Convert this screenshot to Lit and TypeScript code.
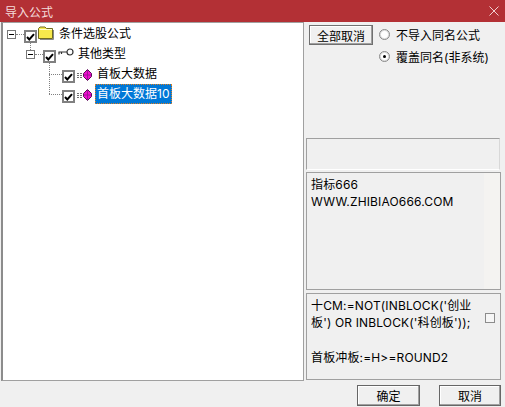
import { LitElement, html, css, svg } from "lit";
import { customElement } from "lit/decorators.js";

const check = html`<span class="chk"><svg width="9" height="8" viewBox="0 0 9 8"><path d="M1 4 L3.3 6.5 L8 1.2" fill="none" stroke="#000" stroke-width="2"/></svg></span>`;
const dotH = (w: number) => html`<span class="dot-h" style="width:${w}px"></span>`;
const expander = html`<span class="exp"><i></i></span>`;
const folder = html`<svg class="ic" width="16" height="14" viewBox="0 0 16 14"><path d="M.5 12.5 V2.5 L2 1 H7 L8.5 2.5 H14.5 V12.5 Z" fill="#f6e84c" stroke="#6f6a20"/><path d="M1.5 3.5 H14" stroke="#fffbd0"/><path d="M15.5 4 V13.5 H2" stroke="#888" fill="none"/></svg>`;
const key = html`<svg class="ic" width="16" height="9" viewBox="0 0 16 9"><path d="M0.5 4 H9 M1 4 V6.5 M3.5 4 V6" stroke="#333" fill="none" stroke-width="1.2"/><circle cx="12" cy="4" r="3" fill="#fff" stroke="#333" stroke-width="1.2"/></svg>`;
const gem = html`<svg class="ic" width="15" height="12" viewBox="0 0 15 12">
  ${svg`<path d="M0 4.5 H6 M0 6.5 H6 M0 8.5 H6" stroke="#707070" stroke-width="1" stroke-dasharray="2 1"/>
  <path d="M10.5 .5 L14.5 4.5 V7.5 L10.5 11.5 L6.5 7.5 V4.5 Z" fill="#f010d0" stroke="#5a1058"/>
  <path d="M7 6 H14 M10.5 1 V11" stroke="#a0109a"/>`}
</svg>`;

@customElement("app-root")
export class AppRoot extends LitElement {
  static styles = css`
    :host { display: block; width: 505px; height: 407px; background: #f0f0f0; overflow: hidden;
      font: 12px "Inter", "Noto Sans CJK SC", sans-serif; color: #000; }
    * { box-sizing: border-box; }
    .title { height: 22px; background: #b33035; color: #f4dcdc; display: flex; align-items: center;
      justify-content: space-between; padding: 0 6px 0 5px; font-size: 12px; }
    .main { display: flex; height: 359px; padding-left: 1px; }
    .tree { width: 303px; background: #fff; border: 1px solid #a0a0a0; border-left: 2px solid #8c8c8c; position: relative; padding-top: 1px; }
    .row { height: 20px; display: flex; align-items: center; position: relative; line-height: 20px; white-space: nowrap; }
    .r1 { padding-left: 4px; }
    .r2 { padding-left: 23px; }
    .r3, .r4 { padding-left: 59px; }
    .exp { width: 9px; height: 9px; border: 1px solid #777; background: #fff; display: flex; align-items: center; justify-content: center; flex: none; }
    .exp i { display: block; width: 5px; height: 1px; background: #000; }
    .dot-h { height: 0; border-top: 1px dotted #808080; flex: none; }
    .chk { width: 13px; height: 13px; border: 2px solid #808080; background: #fff; display: flex; align-items: center; justify-content: center; flex: none; margin-top: 5px; }
    .ic { flex: none; display: block; }
    .r1 .ic { margin: -3px 5px 0 1px; }
    .r2 .ic { margin: -3px 4px 0 2px; }
    .r3 .ic, .r4 .ic { margin: 1px 5px 0 2px; }
    .sel { background: #0078d7; color: #fff; height: 20px; padding: 0 2px; line-height: 20px; outline: 1px dotted #e08020; outline-offset: -1px; width: 77px; margin-left: -2px; }
    .guide { position: absolute; border-left: 1px dotted #808080; }
    .g1 { left: 27px; top: 20px; height: 7px; }
    .g2 { left: 46px; top: 39px; height: 32px; }
    .g2h { position: absolute; left: 46px; border-top: 1px dotted #808080; width: 13px; }
    .side { width: 199px; display: flex; flex-direction: column; padding: 3px 0 0 2px; }
    .opts { height: 113px; display: flex; gap: 6px; padding-left: 3px; }
    .btn { width: 64px; height: 20px; border: 1px solid #707070; background: #f0f0f0; box-shadow: inset -1px -1px 0 #a0a0a0, inset 1px 1px 0 #fff; display: flex; align-items: center; justify-content: center; }
    .radios { display: flex; flex-direction: column; gap: 7px; padding-top: 2px; }
    .radio { display: flex; align-items: center; gap: 6px; height: 15px; }
    .rb { width: 11px; height: 11px; border-radius: 50%; background: #fff; border: 1px solid #888; box-shadow: inset 0 0 0 1px #ddd; display: flex; align-items: center; justify-content: center; }
    .rb.on::after { content: ""; width: 3px; height: 3px; border-radius: 50%; background: #000; }
    .group { height: 32px; width: 194px; border: 1px solid #a0a0a0; border-bottom-color: #fff; border-right-color: #d8d8d8; }
    .memo { margin-top: 2px; width: 195px; height: 118px; border: 1px solid #a0a0a0; background: #f4f3f1; }
    .memo div { width: 177px; height: 100%; background: #f0f0f0; padding: 3px 0 0 4px; line-height: 17px; letter-spacing: .15px; }
    .code { margin-top: 3px; width: 195px; height: 87px; border: 1px solid #a0a0a0; background: #f0f0f0; padding: 3px 4px 0 4px; line-height: 17.4px; display: flex; justify-content: space-between; letter-spacing: .15px; }
    .code p { margin: 0; width: 168px; }
    .code span { width: 10px; height: 10px; border: 1px solid #8c8c8c; background: #f6f6f6; margin: 16px 1px 0 0; flex: none; }
    .foot { display: flex; justify-content: flex-end; gap: 19px; padding: 4px 4px 0 0; }
    .foot .btn { width: 62px; height: 21px; border-color: #666; }
    .foot .btn:first-child { width: 63px; }
  `;
  render() {
    return html`
      <div class="title"><span>导入公式</span>
        <svg width="10" height="10" viewBox="0 0 10 10"><path d="M.5 .5 L9.5 9.5 M9.5 .5 L.5 9.5" stroke="#f0d0d0" fill="none"/></svg>
      </div>
      <div class="main">
        <div class="tree">
          <span class="guide g1"></span><span class="guide g2"></span>
          <span class="g2h" style="top:51px"></span><span class="g2h" style="top:71px"></span>
          <div class="row r1">${expander}${dotH(8)}${check}${folder}<span>条件选股公式</span></div>
          <div class="row r2">${expander}${dotH(8)}${check}${key}<span>其他类型</span></div>
          <div class="row r3">${check}${gem}<span>首板大数据</span></div>
          <div class="row r4">${check}${gem}<span class="sel">首板大数据10</span></div>
        </div>
        <div class="side">
          <div class="opts">
            <div class="btn">全部取消</div>
            <div class="radios">
              <div class="radio"><span class="rb"></span>不导入同名公式</div>
              <div class="radio"><span class="rb on"></span>覆盖同名(非系统)</div>
            </div>
          </div>
          <div class="group"></div>
          <div class="memo"><div>指标666<br>WWW.ZHIBIAO666.COM</div></div>
          <div class="code"><p>十CM:=NOT(INBLOCK('创业板') OR INBLOCK('科创板'));<br><br>首板冲板:=H>=ROUND2</p><span></span></div>
        </div>
      </div>
      <div class="foot"><div class="btn">确定</div><div class="btn">取消</div></div>
    `;
  }
}
